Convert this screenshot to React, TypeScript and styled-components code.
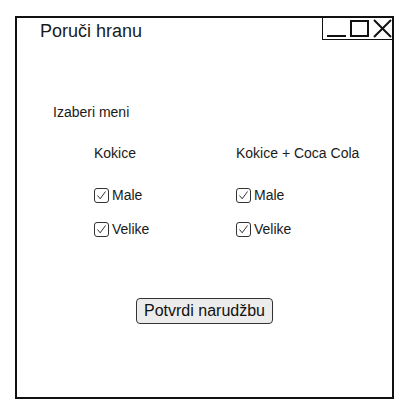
import styled, { createGlobalStyle } from "styled-components";

const GlobalStyle = createGlobalStyle`
  body {
    margin: 0;
    background: #fff;
    font-family: "Liberation Sans", Arial, sans-serif;
    color: #1a1a1a;
  }
`;

const Frame = styled.div`
  box-sizing: border-box;
  margin: 16px 0 0 15px;
  width: 379px;
  height: 383px;
  border: 2px solid #111;
  display: flex;
  flex-direction: column;
`;

const Header = styled.div`
  display: flex;
  justify-content: space-between;
  align-items: flex-start;
`;

const Title = styled.div`
  margin: 2px 0 0 23px;
  font-size: 18px;
  line-height: 22px;
`;

const Controls = styled.div`
  display: flex;
  align-items: center;
  gap: 4px;
  height: 21px;
  padding: 0 0 0 4px;
  border-left: 1px solid #111;
  border-bottom: 1px solid #111;
`;

const Body = styled.div`
  display: flex;
  flex-direction: column;
  padding: 62px 0 0 36px;
`;

const Label = styled.div`
  font-size: 14px;
  line-height: 16px;
`;

const Columns = styled.div`
  display: grid;
  grid-template-columns: 142px auto;
  margin: 25px 0 0 41px;
`;

const Column = styled.div`
  display: flex;
  flex-direction: column;
`;

const Option = styled.label`
  display: flex;
  align-items: center;
  gap: 3px;
  font-size: 14px;
  line-height: 16px;
  margin-top: ${(p: { $first?: boolean }) => (p.$first ? "26px" : "18px")};
`;

const Footer = styled.div`
  display: flex;
  justify-content: center;
  padding: 61px 0 0 0;
`;

const Button = styled.button`
  font-family: "Liberation Sans", Arial, sans-serif;
  font-size: 16px;
  color: #111;
  background: #ececec;
  border: 1px solid #333;
  border-radius: 4px;
  padding: 3px 7px 3px;
  line-height: 18px;
`;

const Check = () => (
  <svg width="15" height="15" viewBox="0 0 15 15">
    <rect x="0.5" y="0.5" width="14" height="14" rx="2.5" fill="#fff" stroke="#333" />
    <path d="M3.5 7.5 L6.2 10.8 L11.5 3.5" fill="none" stroke="#333" strokeWidth="1" />
  </svg>
);

const WindowIcons = () => (
  <>
    <svg width="19" height="20" viewBox="0 0 19 20">
      <line x1="0" y1="17" x2="19" y2="17" stroke="#111" strokeWidth="2" />
    </svg>
    <svg width="19" height="20" viewBox="0 0 19 20">
      <rect x="1" y="2" width="17" height="15" fill="none" stroke="#111" strokeWidth="2" />
    </svg>
    <svg width="19" height="20" viewBox="0 0 19 20">
      <path d="M1 1 L18 18 M18 1 L1 18" stroke="#111" strokeWidth="2" />
    </svg>
  </>
);

const menus = ["Kokice", "Kokice + Coca Cola"];

export default function App() {
  return (
    <>
      <GlobalStyle />
      <Frame>
        <Header>
          <Title>Poruči hranu</Title>
          <Controls>
            <WindowIcons />
          </Controls>
        </Header>
        <Body>
          <Label>Izaberi meni</Label>
          <Columns>
            {menus.map((m) => (
              <Column key={m}>
                <Label>{m}</Label>
                <Option $first>
                  <Check />
                  Male
                </Option>
                <Option>
                  <Check />
                  Velike
                </Option>
              </Column>
            ))}
          </Columns>
        </Body>
        <Footer>
          <Button>Potvrdi narudžbu</Button>
        </Footer>
      </Frame>
    </>
  );
}
